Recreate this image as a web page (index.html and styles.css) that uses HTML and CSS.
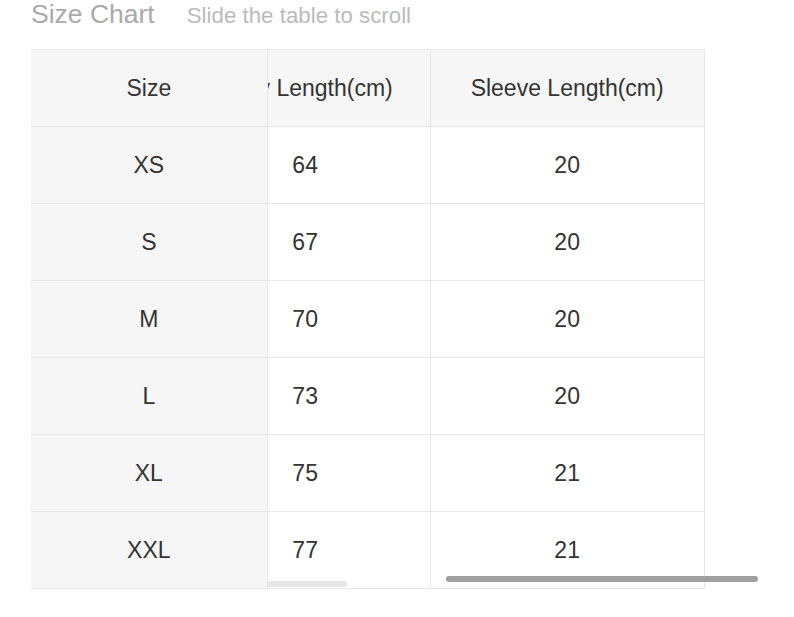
FILE: index.html
```html
<!DOCTYPE html>
<html>
<head>
<meta charset="utf-8">
<link rel="stylesheet" href="styles.css">
</head>
<body>
<div class="page">
  <div class="head">
    <span class="title">Size Chart</span>
    <span class="hint">Slide the table to scroll</span>
  </div>
  <div class="table">
    <div class="fixed">
      <div class="cell">Size</div>
      <div class="cell">XS</div>
      <div class="cell">S</div>
      <div class="cell">M</div>
      <div class="cell">L</div>
      <div class="cell">XL</div>
      <div class="cell">XXL</div>
    </div>
    <div class="scroll">
      <div class="inner">
        <div class="cell hd c2">Body Length(cm)</div>
        <div class="cell hd c3">Sleeve Length(cm)</div>
        <div class="cell c2">64</div><div class="cell c3">20</div>
        <div class="cell c2">67</div><div class="cell c3">20</div>
        <div class="cell c2">70</div><div class="cell c3">20</div>
        <div class="cell c2">73</div><div class="cell c3">20</div>
        <div class="cell c2">75</div><div class="cell c3">21</div>
        <div class="cell c2">77</div><div class="cell c3">21</div>
      </div>
    </div>
  </div>
  <div class="bar-light"></div>
  <div class="bar-dark"></div>
</div>
</body>
</html>
```
FILE: styles.css
```css
html, body {
  margin: 0;
  padding: 0;
  background: #fff;
}
.page {
  position: relative;
  width: 794px;
  height: 617px;
  padding-left: 31px;
  box-sizing: border-box;
  font-family: "Liberation Sans", Arial, sans-serif;
  color: #333;
}
.head {
  display: flex;
  align-items: baseline;
  height: 49px;
}
.title {
  font-size: 26.5px;
  line-height: 29px;
  color: #aaa;
}
.hint {
  font-size: 22.3px;
  line-height: 29px;
  color: #bbb;
  margin-left: 32px;
}
.table {
  display: flex;
  width: 674px;
  border-top: 1px solid #e9e9e9;
}
.fixed {
  width: 236px;
  background: #f6f6f6;
  display: flex;
  flex-direction: column;
}
.cell {
  height: 76px;
  border-bottom: 1px solid #e6e6e6;
  display: flex;
  align-items: center;
  justify-content: center;
  font-size: 23px;
  white-space: nowrap;
}
.scroll {
  width: 438px;
  overflow: hidden;
  border-left: 1px solid #e6e6e6;
}
.inner {
  margin-left: -87px;
  display: grid;
  grid-template-columns: 250px 274px;
}
.hd {
  background: #f6f6f6;
}
.c2 {
  border-right: 1px solid #e6e6e6;
}
.c3 {
  border-right: 1px solid #e6e6e6;
}
.bar-light {
  position: absolute;
  left: 267px;
  top: 581px;
  width: 80px;
  height: 6px;
  border-radius: 3px;
  background: #e6e6e6;
}
.bar-dark {
  position: absolute;
  left: 446px;
  top: 576px;
  width: 312px;
  height: 6px;
  border-radius: 3px;
  background: #a0a0a0;
}
```
